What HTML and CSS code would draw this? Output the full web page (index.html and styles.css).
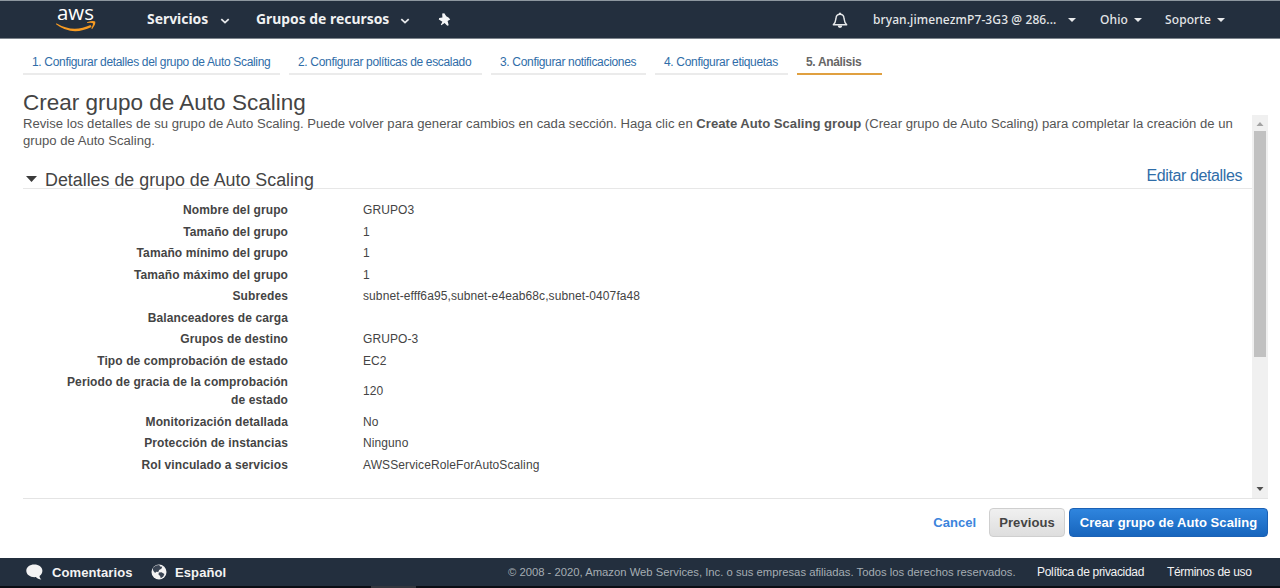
FILE: index.html
```html
<!DOCTYPE html>
<html lang="es">
<head>
<meta charset="utf-8">
<title>Crear grupo de Auto Scaling</title>
<link rel="stylesheet" href="styles.css">
</head>
<body>
<header class="nav">
  <svg class="logo" width="40" height="26" viewBox="0 0 40 26">
    <text class="logo-text" x="1" y="14" textLength="37" lengthAdjust="spacingAndGlyphs">aws</text>
    <path d="M.3 17.200Q17 27.200 34.500 19L35.600 21Q16 30.500 0 18.200z" fill="#f79b22"/>
    <path d="M31 16.300q6-2.300 8.200-.7 .8 2.600-3 7.300l-.9-.5q2.200-4.200 1.600-5.200-1.200-.8-5.800-.1z" fill="#f79b22"/>
  </svg>
  <a class="nav-main services">Servicios</a>
  <svg class="chev" width="10" height="6" viewBox="0 0 10 6"><path d="M1.3 1.2 5 4.6 8.7 1.2" fill="none" stroke="#e8eaec" stroke-width="1.8"/></svg>
  <a class="nav-main groups">Grupos de recursos</a>
  <svg class="chev" width="10" height="6" viewBox="0 0 10 6"><path d="M1.3 1.2 5 4.6 8.7 1.2" fill="none" stroke="#e8eaec" stroke-width="1.8"/></svg>
  <svg class="pin" width="13" height="14" viewBox="0 0 13 14"><path d="M4.200.4 6.300.2 8.300 3.200 10.800 4.700 12.200 6.600 9.600 8 10.700 12.300 9.300 12.700 6.600 10 3.300 12.200 2.800 11.700 4.400 8.700 .8 6.500 1.200 4.900 4.400 4.600z" fill="#f5f6f7"/></svg>
  <svg class="bell" width="16" height="17" viewBox="0 0 16 17"><path d="M1.3 12.8c2.3-2 2.4-4 2.700-6.600C4.200 3.700 5.700 2.300 8 2.300s3.800 1.400 4 3.900c.3 2.600.4 4.600 2.700 6.600z" fill="none" stroke="#e8eaec" stroke-width="1.4" stroke-linejoin="round"/><path d="M7 2.200V.8h2v1.400M5.700 13.500a2.300 2.500 0 0 0 4.600 0z" fill="#e8eaec"/></svg>
  <a class="nav-sub user">bryan.jimenezmP7-3G3 @ 286...</a><i class="caret"></i>
  <a class="nav-sub region">Ohio</a><i class="caret"></i>
  <a class="nav-sub support">Soporte</a><i class="caret"></i>
</header>
<nav class="steps">
  <a class="step s1">1. Configurar detalles del grupo de Auto Scaling</a>
  <a class="step s2">2. Configurar políticas de escalado</a>
  <a class="step s3">3. Configurar notificaciones</a>
  <a class="step s4">4. Configurar etiquetas</a>
  <a class="step s5 current">5. Análisis</a>
</nav>
<main class="content">
  <h1>Crear grupo de Auto Scaling</h1>
  <div class="viewport">
    <div class="page">
      <p class="intro"><span class="line">Revise los detalles de su grupo de Auto Scaling. Puede volver para generar cambios en cada sección. Haga clic en <b>Create Auto Scaling group</b> (Crear grupo de Auto Scaling) para completar la creación de un</span> <span class="line">grupo de Auto Scaling.</span></p>
      <div class="section">
        <svg class="toggle" width="12" height="6" viewBox="0 0 12 6"><path d="M0 0h11L5.500 6z" fill="#3b3b3b"/></svg>
        <h2>Detalles de grupo de Auto Scaling</h2>
        <a class="edit">Editar detalles</a>
      </div>
      <dl class="details">
        <dt>Nombre del grupo</dt><dd>GRUPO3</dd>
        <dt>Tamaño del grupo</dt><dd>1</dd>
        <dt>Tamaño mínimo del grupo</dt><dd>1</dd>
        <dt>Tamaño máximo del grupo</dt><dd>1</dd>
        <dt>Subredes</dt><dd>subnet-efff6a95,subnet-e4eab68c,subnet-0407fa48</dd>
        <dt>Balanceadores de carga</dt><dd></dd>
        <dt>Grupos de destino</dt><dd>GRUPO-3</dd>
        <dt>Tipo de comprobación de estado</dt><dd>EC2</dd>
        <dt>Periodo de gracia de la comprobación<br>de estado</dt><dd>120</dd>
        <dt>Monitorización detallada</dt><dd>No</dd>
        <dt>Protección de instancias</dt><dd>Ninguno</dd>
        <dt>Rol vinculado a servicios</dt><dd>AWSServiceRoleForAutoScaling</dd>
      </dl>
    </div>
    <div class="scrollbar">
      <svg width="8" height="4" viewBox="0 0 8 4"><path d="M.5 4h7L4 0z" fill="#a3a3a3"/></svg>
      <div class="thumb"></div>
      <svg width="8" height="4" viewBox="0 0 8 4"><path d="M.5 0h7L4 4z" fill="#505050"/></svg>
    </div>
  </div>
  <div class="actions">
    <a class="cancel">Cancel</a>
    <button class="btn previous">Previous</button>
    <button class="btn create">Crear grupo de Auto Scaling</button>
  </div>
</main>
<footer class="footer">
  <svg class="bubble" width="17" height="16" viewBox="0 0 17 16"><path d="M8.3.5c4.6 0 8.100 2.700 8.100 6.300 0 2.300-1.100 4-2.900 5.200.1 1.500.8 2.600 1.900 3.500-2.400-.1-4.300-1-5.500-2.400C4.500 13.600.300 10.900.300 6.800.300 3.200 3.700.5 8.300.5z" fill="#f3f3f3"/></svg>
  <a class="foot-main comments">Comentarios</a>
  <svg class="globe" width="16" height="16" viewBox="0 0 16 16"><circle cx="8" cy="8" r="7.500" fill="#f3f3f3"/><path d="M2.200 3.400 5 1.500l3.200-.4 1 1.500 2.100.2-.9 1.900-2.300 1.200-.8 2-2-.1-1.200 1.300-1.700-2.100-.8-2.600zM7.800 8.500l2.700-.2 2.900 1.800-1.100 2.500-2.500 1.700-.7-2.300-1.600-1.500z" fill="#3a4554"/></svg>
  <a class="foot-main lang">Español</a>
  <span class="copy">© 2008 - 2020, Amazon Web Services, Inc. o sus empresas afiliadas. Todos los derechos reservados.</span>
  <a class="foot-link privacy">Política de privacidad</a>
  <a class="foot-link terms">Términos de uso</a>
</footer>
<div class="taskbar"><div class="task"></div></div>
</body>
</html>
```
FILE: styles.css
```css
* { box-sizing: border-box; }
body {
  margin: 0;
  width: 1280px;
  height: 588px;
  overflow: hidden;
  display: flex;
  flex-direction: column;
  background: #fff;
  color: #444;
  font-family: "Liberation Sans", Arial, sans-serif;
  white-space: nowrap;
}
svg { display: block; flex: none; overflow: visible; }
a { flex: none; }

.nav {
  height: 39px;
  flex: none;
  display: flex;
  align-items: center;
  background: #232f3e;
  border-top: 1px solid #8d979f;
  border-bottom: 1px solid #7c848c;
  padding-left: 56px;
  color: #f0f1f2;
  font-family: "Noto Sans", "Open Sans", sans-serif;
}
.logo { margin-right: 51px; margin-top: -1px; }
.logo-text { font: 500 20px "Open Sans", sans-serif; fill: #fff; }
.nav-main { font-size: 13.9px; font-weight: 700; line-height: 20px; margin-top: -2px; }
.services { width: 73px; }
.groups { width: 144px; }
.chev { margin-top: 2px; }
.services + .chev { margin-right: 26px; }
.pin { margin-left: 28px; }
.bell { margin-left: 381px; margin-right: 25px; margin-top: 2px; }
.groups + .chev { margin-right: 0; }
.nav-sub { font-size: 12px; font-weight: 500; line-height: 18px; letter-spacing: .1px; color: #e4e6e8; }
.user { width: 195px; }
.region { width: 33px; }
.support { width: 52px; }
.caret {
  border: 4px solid transparent;
  border-top-color: #e8eaec;
  border-bottom: 0;
  width: 8px;
  margin-top: 1px;
  margin-right: 24px;
}
.region + .caret { margin-left: 1px; margin-right: 23px; }

.steps { display: flex; gap: 9px; padding: 12px 0 0 23px; height: 52px; flex: none; }
.step {
  height: 24px;
  padding-left: 9px;
  line-height: 22px;
  font-size: 12px;
  letter-spacing: -.33px;
  color: #2f6da8;
  border-bottom: 2px solid #ebebeb;
}
.s1 { width: 257px; }
.s2 { width: 193px; }
.s3 { width: 155px; }
.s4 { width: 133px; }
.s5 { width: 85px; }
.current { color: #666; font-weight: 700; border-bottom-color: #e0a040; }

.content { padding: 0 12px 0 23px; height: 467px; flex: none; }
h1 { margin: 0; height: 24px; line-height: 23px; font-size: 22.5px; font-weight: 400; }
.viewport {
  display: flex;
  align-items: flex-start;
  height: 384px;
  border-bottom: 1px solid #e4e4e4;
}
.page { width: 1229px; }
.intro { margin: 0; height: 52px; line-height: 17px; font-size: 13.12px; color: #555; }
.intro .line { display: block; }
.section {
  height: 22px;
  display: flex;
  align-items: center;
  border-bottom: 1px solid #e7e7e7;
  padding-left: 3px;
}
.toggle { margin-top: 2px; }
h2 { margin: 4px 0 0 7px; font-size: 17.85px; line-height: 20px; font-weight: 400; }
.edit { margin: -3px 10px 0 auto; font-size: 16px; letter-spacing: -.4px; line-height: 20px; color: #2f6da8; }
.details {
  margin: 12px 0 0;
  display: grid;
  grid-template-columns: 265px 1fr;
  column-gap: 75px;
  row-gap: 3.55px;
  align-items: center;
  font-size: 12px;
  line-height: 18px;
  letter-spacing: .1px;
}
.details dt { text-align: right; font-weight: 700; }
.details dd { margin: 0; min-height: 18px; }
.scrollbar {
  width: 16px;
  height: 383px;
  display: flex;
  flex-direction: column;
  align-items: center;
  justify-content: space-between;
  background: #f0f0f0;
  padding: 7px 0;
}
.thumb { width: 12px; height: 226px; background: #c1c1c1; margin: 5px 0 auto; }

.actions { display: flex; align-items: center; justify-content: flex-end; padding-top: 9px; font-size: 13px; }
.cancel { color: #3b84dc; font-weight: 700; margin-right: 13px; }
.btn {
  height: 29px;
  border-radius: 4px;
  font: 700 13px "Liberation Sans", Arial, sans-serif;
  letter-spacing: .07px;
  padding: 0;
  white-space: nowrap;
}
.previous { width: 76px; border: 1px solid #cfcfcf; color: #444; background: linear-gradient(#f0f0f0, #dedede); margin-right: 4px; }
.create { width: 199px; border: 1px solid #1b61b5; color: #fff; background: linear-gradient(#2f85de, #1765bd); }

.footer {
  height: 28px;
  flex: none;
  display: flex;
  align-items: center;
  background: #232f3e;
  padding-left: 26px;
  color: #f3f3f3;
}
.foot-main { font-size: 13px; font-weight: 700; letter-spacing: .1px; }
.comments { width: 99px; margin-left: 9px; }
.lang { width: 333px; margin-left: 8px; }
.copy { width: 529px; font-size: 11.27px; color: #a5adb3; }
.foot-link { font-size: 12px; letter-spacing: -.32px; }
.privacy { width: 130px; }
.taskbar { height: 2px; flex: none; background: #0a0d14; padding-left: 371px; }
.task { width: 45px; height: 2px; background: #33363d; }
```
